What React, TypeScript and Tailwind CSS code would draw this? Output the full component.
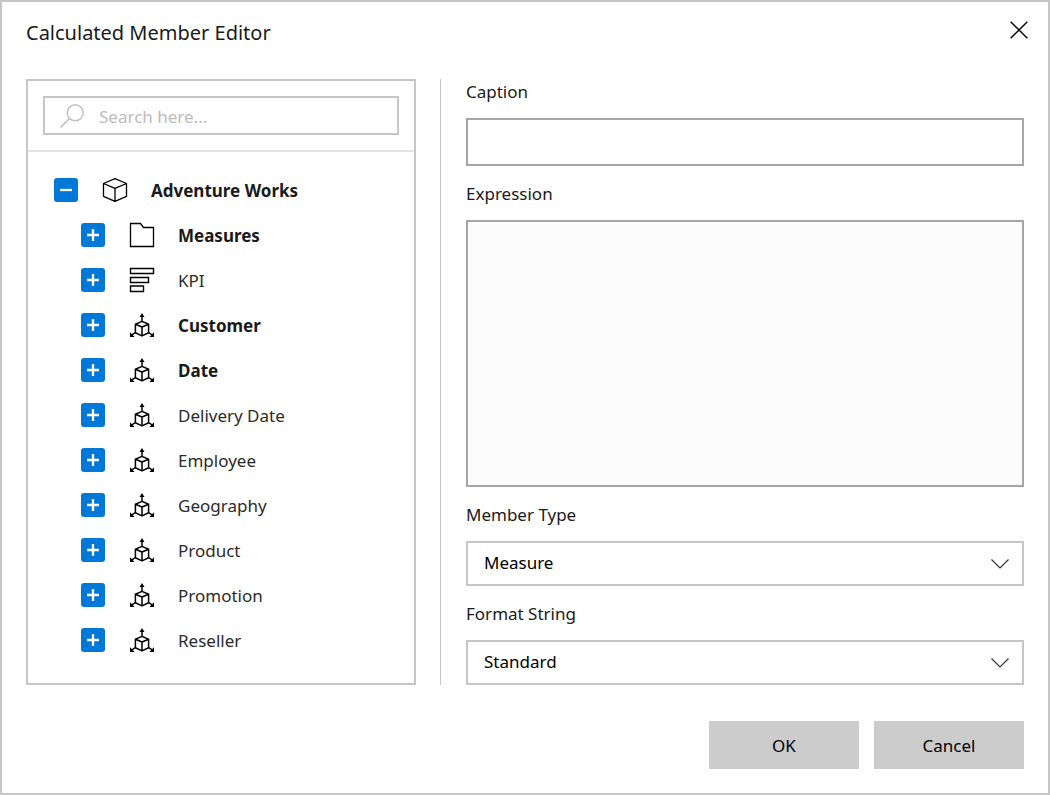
import { useState } from "react";
import type { ReactNode } from "react";

type IconKind = "folder" | "kpi" | "dimension";

interface TreeNode {
  label: string;
  icon: IconKind;
  bold?: boolean;
}

const nodes: TreeNode[] = [
  { label: "Measures", icon: "folder", bold: true },
  { label: "KPI", icon: "kpi" },
  { label: "Customer", icon: "dimension", bold: true },
  { label: "Date", icon: "dimension", bold: true },
  { label: "Delivery Date", icon: "dimension" },
  { label: "Employee", icon: "dimension" },
  { label: "Geography", icon: "dimension" },
  { label: "Product", icon: "dimension" },
  { label: "Promotion", icon: "dimension" },
  { label: "Reseller", icon: "dimension" },
];

function CubeIcon() {
  return (
    <svg className="size-6 shrink-0 overflow-visible" viewBox="0 0 24 24" fill="none" stroke="#000" strokeWidth="1.3" strokeLinejoin="round" aria-hidden="true">
      <path d="M12 .6 23.5 5.5v12.8L12 23.4.5 18.3V5.5zM.5 5.5 12 10.3l11.5-4.8M12 10.3v13.1" />
    </svg>
  );
}

function NodeIcon({ kind }: { kind: IconKind }) {
  if (kind === "folder") {
    return (
      <svg className="size-6 shrink-0 overflow-visible" viewBox="0 0 24 24" fill="none" stroke="#000" strokeWidth="1.3" aria-hidden="true">
        <path d="M.5 23.5V.5h10l3 4h10v19z" />
      </svg>
    );
  }
  if (kind === "kpi") {
    return (
      <svg className="size-6 shrink-0 overflow-visible" viewBox="0 0 24 24" fill="none" stroke="#000" strokeWidth="1.4" aria-hidden="true">
        <path d="M.5.5h23v5H.5zM.5 9.5h18v5H.5zM.5 18h13v5.5H.5z" />
      </svg>
    );
  }
  return (
    <svg className="size-6 shrink-0 overflow-visible" viewBox="0 0 24 24" fill="none" stroke="#000" strokeWidth="1.5" strokeLinejoin="round" aria-hidden="true">
      <path d="M12 8.4 18.6 11.2v8.6L12 22.9l-6.6-3.1v-8.6zM5.4 11.2 12 14l6.6-2.8M12 14v8.9M12 8.4V2M5.4 19.5 1.6 22.2M18.6 19.5l3.8 2.7" />
      <path d="M12 0l2.5 4H9.5zM0 19.2V24h4.6zM24 19.2V24h-4.6z" fill="#000" stroke="none" />
    </svg>
  );
}

function Toggle({ label, open, onToggle }: { label: string; open: boolean; onToggle: () => void }) {
  return (
    <button
      type="button"
      aria-label={`${open ? "Collapse" : "Expand"} ${label}`}
      aria-expanded={open}
      onClick={onToggle}
      className="size-6 shrink-0 rounded-[3px] bg-[#0078d7] text-white"
    >
      <svg className="size-6" viewBox="0 0 24 24" fill="none" stroke="currentColor" strokeWidth="2.3" aria-hidden="true">
        <path d={open ? "M6 12h12" : "M6 12h12M12 6v12"} />
      </svg>
    </button>
  );
}

function Row({ label, bold, icon, initiallyOpen = false, children }: { label: string; bold?: boolean; icon: ReactNode; initiallyOpen?: boolean; children?: ReactNode }) {
  const [open, setOpen] = useState(initiallyOpen);
  return (
    <li className="flex flex-col gap-[21px]">
      <div className="flex h-6 items-center">
        <Toggle label={label} open={open} onToggle={() => setOpen(!open)} />
        <span className="ml-[25px] mr-6 flex">{icon}</span>
        <span className={bold ? "h-6 font-bold leading-[26px] text-[#1a1a1a]" : "h-6 leading-[26px] text-[#2b2b2b]"}>{label}</span>
      </div>
      {open && children}
    </li>
  );
}

function FieldLabel({ htmlFor, children }: { htmlFor: string; children: ReactNode }) {
  return (
    <label htmlFor={htmlFor} className="h-6 leading-[26px]">
      {children}
    </label>
  );
}

function SelectField({ id, label, options }: { id: string; label: string; options: string[] }) {
  return (
    <>
      <FieldLabel htmlFor={id}>{label}</FieldLabel>
      <div className="relative">
        <select id={id} className="block h-[45px] w-full appearance-none border-2 border-[#c6c6c6] bg-white pb-0.5 pl-4 pr-12 text-black">
          {options.map((o) => (
            <option key={o}>{o}</option>
          ))}
        </select>
        <svg className="pointer-events-none absolute right-[15px] top-[18px] h-[10px] w-[18px]" viewBox="0 0 18 10" fill="none" stroke="#333" strokeWidth="1.2" aria-hidden="true">
          <path d="M.5.5 9 9 17.5.5" />
        </svg>
      </div>
    </>
  );
}

export default function App() {
  return (
    <div
      role="dialog"
      aria-labelledby="editor-title"
      className="flex min-h-screen flex-col border-2 border-[#c6c6c6] bg-white px-6 pb-6 pt-[13px] font-['Noto_Sans','Open_Sans',sans-serif] text-[17px] leading-6 text-[#1a1a1a]"
    >
      <header className="flex items-start justify-between">
        <h1 id="editor-title" className="text-[20px] leading-9">Calculated Member Editor</h1>
        <button type="button" aria-label="Close" className="-mr-[10px] flex size-[30px] items-center justify-center">
          <svg className="size-[18px]" viewBox="0 0 18 18" fill="none" stroke="#000" strokeWidth="1.5" aria-hidden="true">
            <path d="M.7.7l16.6 16.6M17.3.7.7 17.3" />
          </svg>
        </button>
      </header>

      <main className="mt-7 grid flex-1 grid-cols-[390fr_584fr] gap-6">
        <section aria-label="Cube elements" className="border-2 border-[#c6c6c6]">
          <div className="border-b-2 border-[#e6e2e2] p-[15px]">
            <label className="flex h-[39px] items-center border-2 border-[#c6c6c6] pl-[15px]">
              <svg className="size-6 shrink-0" viewBox="0 0 24 24" fill="none" stroke="#c0c0c0" strokeWidth="1.5" aria-hidden="true">
                <circle cx="15.2" cy="8.8" r="8" />
                <path d="M9.5 14.5.6 23.4" />
              </svg>
              <input type="text" aria-label="Search" placeholder="Search here..." className="ml-[15px] min-w-0 flex-1 pt-0.5 outline-none placeholder:text-[#bcbcbc]" />
            </label>
          </div>
          <ul className="pb-[31px] pl-[26px] pt-[26px]">
            <Row label="Adventure Works" bold icon={<CubeIcon />} initiallyOpen>
              <ul className="flex flex-col gap-[21px] pl-[27px]">
                {nodes.map((n) => (
                  <Row key={n.label} label={n.label} bold={n.bold} icon={<NodeIcon kind={n.icon} />} />
                ))}
              </ul>
            </Row>
          </ul>
        </section>

        <form className="flex flex-col gap-[15px] border-l border-[#c6c6c6] pl-[25px]">
          <FieldLabel htmlFor="caption">Caption</FieldLabel>
          <input id="caption" type="text" className="h-12 border-2 border-[#a6a6a6] px-4" />
          <FieldLabel htmlFor="expression">Expression</FieldLabel>
          <textarea id="expression" className="min-h-40 flex-1 resize-none border-2 border-[#a6a6a6] bg-[#fcfcfc] px-4 py-2" />
          <SelectField id="member-type" label="Member Type" options={["Measure", "Dimension"]} />
          <SelectField id="format-string" label="Format String" options={["Standard", "Currency", "Percent"]} />
        </form>
      </main>

      <footer className="mt-9 flex justify-end gap-[15px] text-black">
        <button type="button" className="h-12 w-[150px] bg-[#ccc] pt-0.5">OK</button>
        <button type="button" className="h-12 w-[150px] bg-[#ccc] pt-0.5">Cancel</button>
      </footer>
    </div>
  );
}
